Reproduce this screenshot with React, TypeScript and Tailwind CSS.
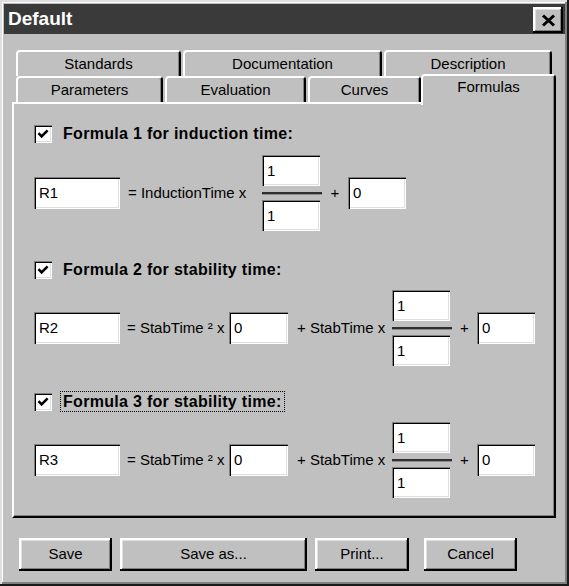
import React from "react";

// 3D edge styles of the old Windows look
const raised =
  "shadow-[inset_-2px_-2px_0_#000,inset_2px_2px_0_#fff,inset_-3px_-3px_0_#808080,inset_3px_3px_0_#dfdfdf]";
const sunken =
  "shadow-[inset_1px_1px_0_#808080,inset_2px_2px_0_#000,inset_-1px_-1px_0_#fff,inset_-2px_-2px_0_#dfdfdf]";

function Field({ children, className }: { children?: React.ReactNode; className: string }) {
  return (
    <div className={`flex shrink-0 items-center bg-white pb-[1px] pl-[5px] text-[15px] leading-none text-black ${sunken} ${className}`}>
      {children}
    </div>
  );
}

function Fraction() {
  return (
    <div className="flex w-[60px] shrink-0 flex-col">
      <Field className="h-[31px] w-[58px]">1</Field>
      <div className="my-[6px] h-[2px] w-[60px] bg-[#2e2e2e] shadow-[0_1px_0_#8a8a8a]" />
      <Field className="h-[31px] w-[58px]">1</Field>
    </div>
  );
}

function CheckRow({ label, focused }: { label: string; focused?: boolean }) {
  return (
    <div className="flex items-center">
      <div className={`flex h-[18px] w-[18px] items-center justify-center bg-white ${sunken}`}>
        <svg width="12" height="10" viewBox="0 0 12 10">
          <path d="M1.5 4.2 L4.6 7.4 L10.6 1.4" stroke="#000" strokeWidth="2.6" fill="none" />
        </svg>
      </div>
      <span
        className={`ml-[8px] border border-dotted px-[2px] text-[16px] font-bold leading-[19px] tracking-[0.3px] text-black ${
          focused ? "border-black" : "border-transparent"
        }`}
      >
        {label}
      </span>
    </div>
  );
}

function StabRow({ name }: { name: string }) {
  return (
    <div className="flex items-center text-[15px] text-black">
      <Field className="h-[32px] w-[86px]">{name}</Field>
      <span className="ml-[7px] w-[102px] shrink-0 whitespace-nowrap">= StabTime ² x</span>
      <Field className="h-[32px] w-[59px]">0</Field>
      <span className="w-[104px] shrink-0 whitespace-nowrap pl-[9px]">+ StabTime x</span>
      <Fraction />
      <span className="w-[25px] shrink-0 text-center">+</span>
      <Field className="h-[32px] w-[58px]">0</Field>
    </div>
  );
}

function Tab({ label, className }: { label: string; className: string }) {
  return (
    <div
      className={`flex shrink-0 items-center justify-center rounded-t-[4px] border-l-2 border-r-2 border-t-2 border-l-white border-r-black border-t-white bg-[#c0c0c0] text-[15px] text-black shadow-[inset_-1px_0_0_#808080] ${className}`}
    >
      {label}
    </div>
  );
}

function PushButton({ label, className }: { label: string; className: string }) {
  return (
    <div className={`flex h-[33px] shrink-0 items-center justify-center bg-[#c0c0c0] text-[15px] text-black ${raised} ${className}`}>
      {label}
    </div>
  );
}

export default function App() {
  return (
    <div
      className={`h-[586px] w-[569px] bg-[#c0c0c0] p-[4px] font-['Liberation_Sans',Arial,sans-serif] shadow-[inset_-2px_-2px_0_#1a1a1a,inset_2px_2px_0_#dfdfdf,inset_-4px_-4px_0_#808080,inset_3px_3px_0_#fff]`}
    >
      {/* title bar */}
      <div className="flex h-[30px] items-start justify-between bg-[#3a3a3a]">
        <span className="pl-[4px] pt-[3px] text-[19px] font-bold leading-[24px] text-white">Default</span>
        <div className={`mr-[2px] mt-[3px] flex h-[26px] w-[30px] items-center justify-center bg-[#c0c0c0] ${raised}`}>
          <svg width="15" height="13" viewBox="0 0 15 13">
            <path d="M2 1.5 L13 11.5 M13 1.5 L2 11.5" stroke="#000" strokeWidth="3" />
          </svg>
        </div>
      </div>

      {/* tab strip */}
      <div className="ml-[8px] mt-[16px] w-[544px]">
        <div className="flex h-[26px] gap-[2px] pl-[4px]">
          <Tab label="Standards" className="h-[26px] w-[165px]" />
          <Tab label="Documentation" className="h-[26px] w-[199px]" />
          <Tab label="Description" className="h-[26px] w-[168px]" />
        </div>
        <div className="flex h-[26px] items-start gap-[2px] pl-[4px]">
          <Tab label="Parameters" className="h-[26px] w-[147px]" />
          <Tab label="Evaluation" className="h-[26px] w-[141px]" />
          <Tab label="Curves" className="h-[26px] w-[113px]" />
          <Tab label="Formulas" className="relative z-10 -ml-[2px] -mt-[2px] h-[31px] w-[135px] pb-[6px]" />
        </div>

        {/* tab page */}
        <div className="h-[416px] border-b-2 border-l-2 border-r-2 border-t-2 border-b-black border-l-white border-r-black border-t-white pl-[20px] pt-[19px] shadow-[inset_-1px_-1px_0_#808080]">
          <CheckRow label="Formula 1 for induction time:" />
          <div className="mt-[11px] flex items-center text-[15px] text-black">
            <Field className="h-[32px] w-[86px]">R1</Field>
            <span className="ml-[8px] w-[134px] shrink-0 whitespace-nowrap">= InductionTime x</span>
            <Fraction />
            <span className="w-[26px] shrink-0 text-center">+</span>
            <Field className="h-[32px] w-[58px]">0</Field>
          </div>

          <div className="mt-[28px]">
            <CheckRow label="Formula 2 for stability time:" />
          </div>
          <div className="mt-[10px]">
            <StabRow name="R2" />
          </div>

          <div className="mt-[25px]">
            <CheckRow label="Formula 3 for stability time:" focused />
          </div>
          <div className="mt-[10px]">
            <StabRow name="R3" />
          </div>
        </div>
      </div>

      {/* buttons */}
      <div className="ml-[15px] mt-[20px] flex gap-[8px]">
        <PushButton label="Save" className="w-[93px]" />
        <PushButton label="Save as..." className="w-[187px]" />
        <PushButton label="Print..." className="w-[94px]" />
        <PushButton label="Cancel" className="ml-[7px] w-[93px]" />
      </div>
    </div>
  );
}
